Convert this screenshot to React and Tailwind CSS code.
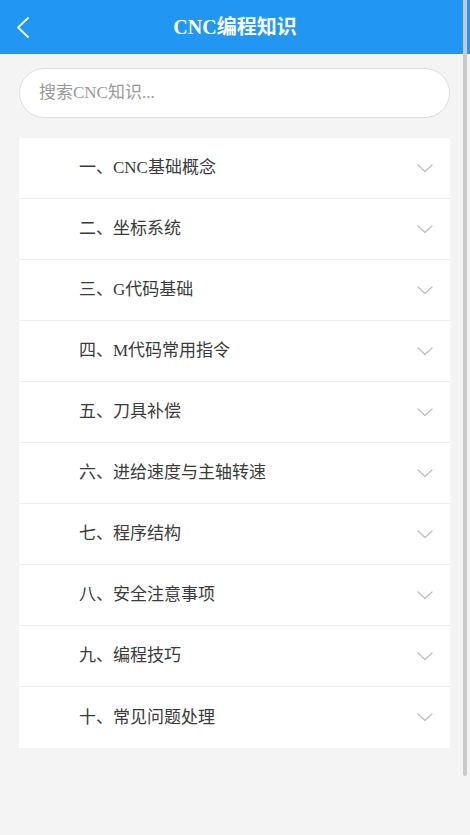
import React from "react";

const items = [
  "一、CNC基础概念",
  "二、坐标系统",
  "三、G代码基础",
  "四、M代码常用指令",
  "五、刀具补偿",
  "六、进给速度与主轴转速",
  "七、程序结构",
  "八、安全注意事项",
  "九、编程技巧",
  "十、常见问题处理",
];

export default function App() {
  return (
    <div
      className="relative h-[835px] w-full overflow-hidden bg-[#f4f4f4]"
      style={{ fontFamily: '"Liberation Serif", "Noto Sans CJK SC", serif' }}
    >
      <header className="relative flex h-[54px] items-center justify-center bg-[#2196f3]">
        <button className="absolute left-[14px] top-[14px] flex h-[26px] w-[18px] items-center justify-center">
          <svg width="16" height="24" viewBox="0 0 16 24" fill="none">
            <path d="M13 3 L3 12.5 L13 22" stroke="white" strokeWidth="1.8" strokeLinecap="round" strokeLinejoin="round" />
          </svg>
        </button>
        <h1 className="text-[20px] font-bold text-white">CNC编程知识</h1>
      </header>

      <div className="pl-[19px] pr-[20px] pt-[14px]">
        <div className="flex h-[50px] items-center rounded-full border border-[#dddddd] bg-white px-[19px]">
          <span className="text-[17px] text-[#999999]">搜索CNC知识...</span>
        </div>

        <ul className="mt-[20px] bg-white">
          {items.map((t, i) => (
            <li
              key={t}
              className={`flex h-[61px] items-center justify-between pl-[60px] pr-[17px] ${
                i < items.length - 1 ? "border-b border-[#ededf3]" : ""
              }`}
            >
              <span className="text-[17px] text-[#3a3a3a]">{t}</span>
              <svg width="16" height="9" viewBox="0 0 16 9" fill="none">
                <path d="M1 1 L8 7.5 L15 1" stroke="#bdbdbd" strokeWidth="1.2" strokeLinecap="round" strokeLinejoin="round" />
              </svg>
            </li>
          ))}
        </ul>
      </div>

      <div className="pointer-events-none absolute right-[3px] top-0 h-[776px] w-[4px] rounded-b-sm bg-[#c9c9c9]" />
    </div>
  );
}
